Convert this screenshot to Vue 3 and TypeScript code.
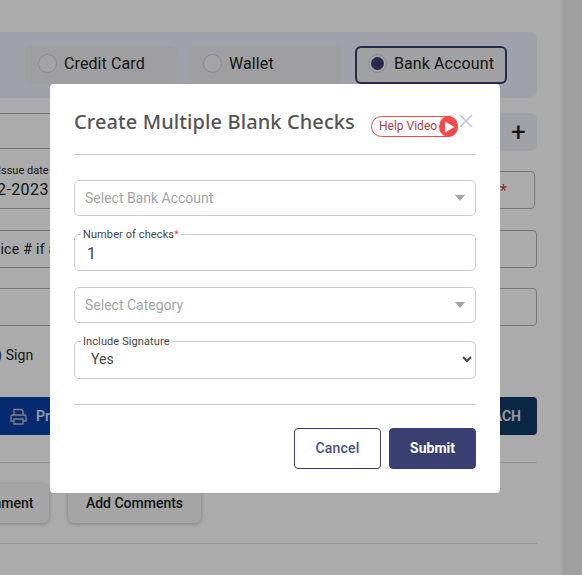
<script setup lang="ts">
const methods = [
  { label: 'Credit Card', active: false },
  { label: 'Wallet', active: false },
  { label: 'Bank Account', active: true },
]
</script>

<template>
  <div class="page">
    <main class="content">
      <section class="band">
        <div v-for="m in methods" :key="m.label" class="method" :class="{ active: m.active }">
          <span class="radio"><span v-if="m.active" class="dot"></span></span>
          <span>{{ m.label }}</span>
        </div>
      </section>
      <div class="row row-first">
        <div class="bg-field grow"></div>
        <div class="plus">+</div>
      </div>
      <fieldset class="bg-field date">
        <legend>Issue date</legend>
        <span class="date-value">12-12-2023</span>
        <span class="star">*</span>
      </fieldset>
      <div class="bg-field inv"><span>Invoice # if any</span></div>
      <div class="bg-field third"></div>
      <div class="sign">(Add) Sign</div>
      <div class="actions">
        <button class="print">
          <svg width="17" height="17" viewBox="0 0 17 17" fill="none" stroke="#b9bdc9" stroke-width="1.4">
            <path d="M4 7V1.5h7.5L13 3v4" />
            <path d="M4 13H1V8.5A1.5 1.5 0 0 1 2.5 7h12A1.5 1.5 0 0 1 16 8.500V13h-3" />
            <path d="M4 11h9v5H4z" />
          </svg>
          <span>Print Check</span>
        </button>
        <button class="ach">Send ACH</button>
      </div>
      <hr class="bg-rule first-rule" />
      <div class="cards">
        <div class="card attach">Add Attachment</div>
        <div class="card comments">Add Comments</div>
      </div>
      <hr class="bg-rule second-rule" />
    </main>
    <aside class="rail"></aside>

    <div class="backdrop"></div>

    <div class="modal">
      <header class="head">
        <h2>Create Multiple Blank Checks</h2>
        <div class="help">
          <span>Help Video</span>
          <span class="play"><svg width="11" height="12" viewBox="0 0 11 12"><path d="M1 0.500 10.500 6 1 11.500z" fill="#fff" /></svg></span>
        </div>
        <svg class="close" width="14" height="14" viewBox="0 0 14 14" fill="none" stroke="#c3c3dc" stroke-width="1.600">
          <path d="M1 1l12 12M13 1 1 13" />
        </svg>
      </header>
      <hr class="rule" />
      <div class="fake-select sel-one">
        <span>Select Bank Account</span><i class="caret"></i>
      </div>
      <fieldset class="box num">
        <legend>Number of checks<b>*</b></legend>
        <input class="num-input" value="1" />
      </fieldset>
      <div class="fake-select sel-two">
        <span>Select Category</span><i class="caret"></i>
      </div>
      <fieldset class="box sig">
        <legend>Include Signature</legend>
        <select class="sig-select">
          <option>Yes</option>
          <option>No</option>
        </select>
      </fieldset>
      <hr class="rule rule-bottom" />
      <footer class="foot">
        <button class="cancel">Cancel</button>
        <button class="submit">Submit</button>
      </footer>
    </div>
  </div>
</template>

<style>
html, body { margin: 0; overflow: hidden; background: #fff; }
</style>

<style scoped>
.page {
  position: relative;
  width: 582px;
  height: 575px;
  overflow: hidden;
  display: flex;
  font-family: Roboto, "Liberation Sans", sans-serif;
  color: #222;
  background: #fff;
}
.content {
  width: 537px;
  flex: none;
  padding-top: 32px;
  box-sizing: border-box;
}
.rail { margin-left: 25px; flex: 1; background: #efefef; }
.band {
  margin-left: -20px;
  height: 66px;
  background: #f1f1ff;
  border-radius: 0 8px 8px 0;
  padding: 14px 0 0 45px;
  box-sizing: border-box;
  display: flex;
  gap: 13px;
}
.method {
  width: 152px;
  height: 38px;
  box-sizing: border-box;
  background: #ededf0;
  border-radius: 6px;
  display: flex;
  align-items: center;
  gap: 7px;
  padding: 0 0 4px 13px;
  font-size: 16px;
  letter-spacing: 0.1px;
}
.method.active {
  border: 2px solid #3a3f72;
  background: #f0f0f3;
  padding: 0 0 4px 11px;
}
.radio {
  width: 19px;
  height: 19px;
  border-radius: 50%;
  background: #f5f5f7;
  border: 1px solid #d0d0d8;
  box-sizing: border-box;
  display: flex;
  align-items: center;
  justify-content: center;
}
.dot { width: 13px; height: 13px; border-radius: 50%; background: #3a3f72; }
.row { display: flex; gap: 0; }
.row-first { margin-top: 15px; margin-left: -20px; height: 38px; }
.bg-field {
  border: 1px solid #b4b4b4;
  border-radius: 4px;
  box-sizing: border-box;
}
.grow { flex: 1; height: 36px; }
.plus {
  width: 47px;
  height: 38px;
  background: #f1f1fb;
  border-radius: 0 6px 6px 0;
  font-size: 26px;
  line-height: 38px;
  text-align: center;
  color: #222;
  padding-left: 10px;
  box-sizing: border-box;
}
.date {
  margin: 14px 0 0 -60px;
  width: 595px;
  height: 44px;
  padding: 0 0 0 55px;
  position: relative;
  display: block;
  min-width: 0;
}
.date legend {
  font-size: 11px;
  padding: 0 2px;
  margin-left: 0;
  line-height: 12px;
}
.date-value { font-size: 16px; line-height: 26px; margin-left: -32px; letter-spacing: 0.4px; }
.star { position: absolute; right: 27px; top: 4px; color: #e53030; font-size: 16px; }
.inv {
  margin: 21px 0 0 -60px;
  height: 38px;
  line-height: 36px;
  font-size: 14px;
  padding-left: 32px;
  letter-spacing: 0.3px;
}
.third { margin: 20px 0 0 -60px; height: 38px; }
.sign {
  margin: 19px 0 0 -33px;
  font-size: 14px;
  line-height: 20px;
  height: 20px;
  letter-spacing: 0.1px;
  white-space: nowrap;
}
.actions {
  margin: 32px 0 0 -40px;
  display: flex;
  justify-content: space-between;
}
.print, .ach {
  height: 38px;
  border: 0;
  border-radius: 4px;
  font: 600 14px Roboto, sans-serif;
  display: flex;
  align-items: center;
}
.print { background: #0a3fa8; color: #dfe3f5; padding: 0 20px 0 50px; gap: 9px; }
.ach { background: #103a67; color: #e8e8e8; padding: 0 16px; }
.bg-rule { border: 0; border-top: 1px solid #dcdcdc; margin: 0; }
.first-rule { margin: 27px 0 0 -40px; }
.cards { display: flex; gap: 19px; margin: 21px 0 0 -84px; }
.card {
  height: 39px;
  border-radius: 6px;
  background: #f6f6f6;
  box-shadow: 0 1px 4px rgba(0, 0, 0, 0.25);
  font-size: 14px;
  font-weight: 500;
  line-height: 38px;
  text-align: center;
  white-space: nowrap;
}
.attach { width: 133px; }
.comments { width: 133px; }
.second-rule { margin: 20px 0 0 -40px; }
.backdrop {
  position: absolute;
  inset: 0;
  background: rgba(0, 0, 0, 0.33);
}
.modal {
  position: absolute;
  left: 50px;
  top: 84px;
  width: 450px;
  height: 409px;
  box-sizing: border-box;
  background: #fff;
  border-radius: 4px;
  padding: 0 24px;
}
.head {
  height: 70px;
  display: flex;
  position: relative;
}
.head h2 {
  margin: 24px 0 0;
  font: 500 20px/28px "Noto Sans", "Open Sans", sans-serif;
  color: #555;
  letter-spacing: 0.1px;
  white-space: nowrap;
}
.help {
  position: absolute;
  left: 297px;
  top: 32px;
  width: 87px;
  height: 21px;
  box-sizing: border-box;
  border: 1px solid #f44a4a;
  border-radius: 11px;
  font-size: 12px;
  line-height: 19px;
  color: #a83c4a;
  padding-left: 7px;
}
.play {
  position: absolute;
  right: -1px;
  top: -1px;
  width: 19px;
  height: 21px;
  border-radius: 50%;
  background: #f44a4a;
  display: flex;
  align-items: center;
  justify-content: center;
  padding-left: 2px;
  box-sizing: border-box;
}
.close { position: absolute; left: 385px; top: 30px; }
.rule { border: 0; border-top: 1px solid #ccc; margin: 0; }
.fake-select {
  height: 36px;
  border: 1px solid #ccc;
  border-radius: 5px;
  box-sizing: border-box;
  display: flex;
  align-items: center;
  justify-content: space-between;
  padding: 0 10px;
  font-size: 14px;
  color: #a5a5a5;
}
.sel-one { margin-top: 25px; }
.sel-two { margin-top: 16px; }
.caret {
  width: 0;
  height: 0;
  border-left: 5.500px solid transparent;
  border-right: 5.500px solid transparent;
  border-top: 6px solid #a5a5a5;
}
.box {
  margin: 0;
  padding: 0;
  border: 1px solid #ccc;
  border-radius: 5px;
  height: 43px;
  min-width: 0;
  box-sizing: border-box;
}
.box legend {
  font-size: 11px;
  line-height: 14px;
  height: 12px;
  margin-left: 6px;
  padding: 0 2px;
  color: #444;
  letter-spacing: 0.1px;
}
.box legend b { color: #f0506e; font-weight: 400; }
.num { margin-top: 12px; }
.sig { margin-top: 12px; height: 44px; }
.num-input {
  display: block;
  width: 100%;
  box-sizing: border-box;
  border: 0;
  outline: 0;
  height: 26px;
  padding: 0 12px;
  background: transparent;
  font: 16px Roboto, sans-serif;
  color: #444;
}
.sig-select {
  display: block;
  width: 100%;
  height: 24px;
  border: 0;
  outline: 0;
  padding: 0 0 0 12px;
  background: transparent;
  font: 14px Roboto, sans-serif;
  color: #444;
}
.rule-bottom { margin-top: 25px; }
.foot {
  margin-top: 23px;
  display: flex;
  justify-content: flex-end;
  gap: 8px;
}
.foot button {
  width: 87px;
  height: 41px;
  border-radius: 4px;
  box-sizing: border-box;
  font: 500 14px Roboto, sans-serif;
  letter-spacing: 0.2px;
  padding: 0 0 2px;
}
.cancel { background: #fff; border: 1px solid #3a3f72; color: #4a4f80; }
.submit { background: #3a3f72; border: 1px solid #3a3f72; color: #fff; font-weight: 700 !important; letter-spacing: 0 !important; }
</style>
